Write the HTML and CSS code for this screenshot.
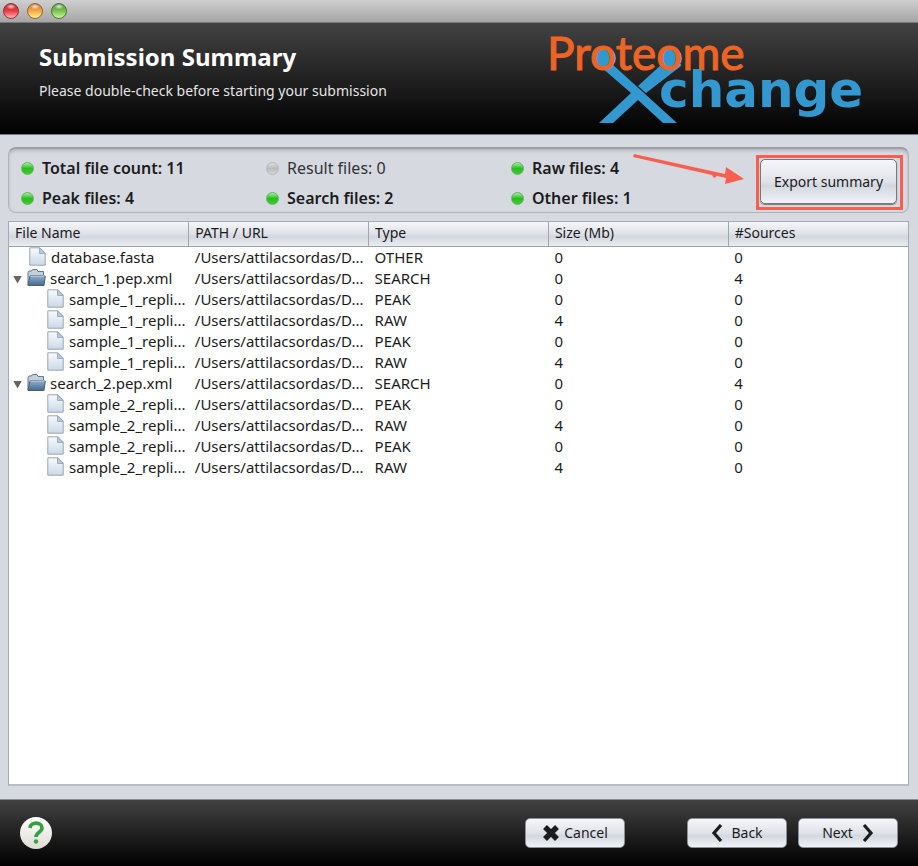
FILE: index.html
```html
<!DOCTYPE html>
<html lang="en">
<head>
<meta charset="utf-8">
<title>Submission Summary</title>
<link rel="stylesheet" href="styles.css">
</head>
<body>
<svg class="defs" aria-hidden="true">
  <defs>
    <linearGradient id="paper" x1="0" y1="0" x2="0" y2="1"><stop offset="0" stop-color="#f8fafc"/><stop offset="1" stop-color="#c9d9e8"/></linearGradient>
    <linearGradient id="folder" x1="0" y1="0" x2="0" y2="1"><stop offset="0" stop-color="#91adc8"/><stop offset="1" stop-color="#45688d"/></linearGradient>
    <symbol id="file" viewBox="0 0 17 19">
      <path d="M.8 .8H11L16.2 6V18.2H.8Z" fill="url(#paper)" stroke="#9aa5b1"/>
      <path d="M10.500 1V6.500H16Z" fill="#b4cbe1" stroke="#8fa4b9" stroke-width=".8"/>
    </symbol>
    <symbol id="dir" viewBox="0 0 19 19">
      <path d="M1 17V4.500L2 3H4L6 1.500H10L11 3.500H16.500V7" fill="#c3cfda" stroke="#62758a"/>
      <path d="M1 17L3 8H18.300L17 17.500H1Z" fill="url(#folder)" stroke="#41607f"/>
      <path d="M3.500 8.500H17.500" stroke="#a9c0d6"/>
    </symbol>
  </defs>
</svg>
<div class="titlebar"><span class="light red"></span><span class="light amber"></span><span class="light green"></span></div>
<header class="banner">
  <div class="heading">
    <h1>Submission Summary</h1>
    <p>Please double-check before starting your submission</p>
  </div>
  <svg class="logo" viewBox="0 0 374 101" role="img" aria-label="Proteome Xchange">
    <path d="M57 38L68 36L133 95H119L94 72L69 95H55L87 65L57 39ZM129 36H137V38L102 65L94 58L118 36Z" fill="#3498d0"/>
    <circle cx="62" cy="30" r="10" fill="#3498d0"/><circle cx="128" cy="30" r="10" fill="#3498d0"/>
    <text class="logo-top" x="3" y="42">Proteome</text>
    <text class="logo-bottom" x="115" y="79">change</text>
  </svg>
</header>
<main>
  <section class="summary">
    <ul>
      <li>Total file count: 11</li>
      <li class="none">Result files: 0</li>
      <li>Raw files: 4</li>
      <li>Peak files: 4</li>
      <li>Search files: 2</li>
      <li>Other files: 1</li>
    </ul>
    <div class="callout">
      <button class="btn export" type="button">Export summary</button>
      <svg class="arrow" viewBox="0 0 112 34" aria-hidden="true"><path d="M1 0L92 20L93 13L111 25L92 30L93 24L84 22L81 24L79 21L0 3Z" fill="#f95f50"/></svg>
    </div>
  </section>
  <div class="files">
    <table>
      <thead><tr><th>File Name</th><th>PATH / URL</th><th>Type</th><th>Size (Mb)</th><th>#Sources</th></tr></thead>
      <tbody>
        <tr><td class="top"><svg class="fi"><use href="#file"/></svg>database.fasta</td><td>/Users/attilacsordas/D...</td><td>OTHER</td><td>0</td><td>0</td></tr>
        <tr><td class="group"><button class="twist" type="button" aria-label="Collapse"></button><svg class="di"><use href="#dir"/></svg>search_1.pep.xml</td><td>/Users/attilacsordas/D...</td><td>SEARCH</td><td>0</td><td>4</td></tr>
        <tr><td class="child"><svg class="fi"><use href="#file"/></svg>sample_1_repli...</td><td>/Users/attilacsordas/D...</td><td>PEAK</td><td>0</td><td>0</td></tr>
        <tr><td class="child"><svg class="fi"><use href="#file"/></svg>sample_1_repli...</td><td>/Users/attilacsordas/D...</td><td>RAW</td><td>4</td><td>0</td></tr>
        <tr><td class="child"><svg class="fi"><use href="#file"/></svg>sample_1_repli...</td><td>/Users/attilacsordas/D...</td><td>PEAK</td><td>0</td><td>0</td></tr>
        <tr><td class="child"><svg class="fi"><use href="#file"/></svg>sample_1_repli...</td><td>/Users/attilacsordas/D...</td><td>RAW</td><td>4</td><td>0</td></tr>
        <tr><td class="group"><button class="twist" type="button" aria-label="Collapse"></button><svg class="di"><use href="#dir"/></svg>search_2.pep.xml</td><td>/Users/attilacsordas/D...</td><td>SEARCH</td><td>0</td><td>4</td></tr>
        <tr><td class="child"><svg class="fi"><use href="#file"/></svg>sample_2_repli...</td><td>/Users/attilacsordas/D...</td><td>PEAK</td><td>0</td><td>0</td></tr>
        <tr><td class="child"><svg class="fi"><use href="#file"/></svg>sample_2_repli...</td><td>/Users/attilacsordas/D...</td><td>RAW</td><td>4</td><td>0</td></tr>
        <tr><td class="child"><svg class="fi"><use href="#file"/></svg>sample_2_repli...</td><td>/Users/attilacsordas/D...</td><td>PEAK</td><td>0</td><td>0</td></tr>
        <tr><td class="child"><svg class="fi"><use href="#file"/></svg>sample_2_repli...</td><td>/Users/attilacsordas/D...</td><td>RAW</td><td>4</td><td>0</td></tr>
      </tbody>
    </table>
  </div>
</main>
<footer>
  <button class="help" type="button" aria-label="Help"><svg viewBox="0 0 32 32"><path d="M10 11C10.500 4.500 22 4.500 22 11C22 15.500 16 15 16 20" fill="none" stroke="#35a044" stroke-width="3.600"/><circle cx="16" cy="24.500" r="2.200" fill="#35a044"/></svg></button>
  <button class="btn cancel" type="button"><svg class="cross" viewBox="0 0 18 18"><path d="M3 3L15 15M15 3L3 15" stroke="#1c1c1c" stroke-width="5.500"/></svg>Cancel</button>
  <button class="btn back" type="button"><svg class="chev" viewBox="0 0 12 18"><path d="M10 1L3 9L10 17" fill="none" stroke="#1c1c1c" stroke-width="3.200"/></svg>Back</button>
  <button class="btn next" type="button">Next<svg class="chev" viewBox="0 0 12 18"><path d="M2 1L9 9L2 17" fill="none" stroke="#1c1c1c" stroke-width="3.200"/></svg></button>
</footer>
</body>
</html>
```
FILE: styles.css
```css
* { box-sizing: border-box; }

body {
  margin: 0;
  min-height: 100vh;
  display: flex;
  flex-direction: column;
  background: #d6d9df;
  color: #1c1c1c;
  font: 14px/20px "Noto Sans", "Open Sans", sans-serif;
}

.defs { position: absolute; width: 0; height: 0; }

.titlebar {
  display: flex;
  align-items: center;
  gap: 8px;
  height: 23px;
  padding-left: 3px;
  background: linear-gradient(#cfcfcf, #a5a5a5);
  border-bottom: 1px solid #777;
}

.light {
  width: 16px;
  height: 16px;
  border-radius: 50%;
  border: 1px solid #6b5a50;
}

.red { background: radial-gradient(ellipse 5px 3px at 50% 18%, #fffc, transparent), linear-gradient(#b5202b, #ed3a44 50%, #ffb3b3); border-color: #8a3538; }
.amber { background: radial-gradient(ellipse 5px 3px at 50% 18%, #fffc, transparent), linear-gradient(#c9692c, #f5ab45 50%, #fff08c); border-color: #95643a; }
.green { background: radial-gradient(ellipse 5px 3px at 50% 18%, #fffc, transparent), linear-gradient(#4c8b35, #7cc350 50%, #d0f59c); border-color: #4d7440; }

.banner {
  display: flex;
  justify-content: space-between;
  height: 112px;
  padding-left: 39px;
  background: linear-gradient(#424242, #000);
  border-bottom: 1px solid #77797d;
  color: #fff;
}

.heading { padding-top: 18px; }

h1 {
  margin: 0;
  font-size: 24px;
  line-height: 32px;
}

.heading p {
  margin: 8px 0 0;
  color: #e4e4e4;
}

.logo { width: 374px; height: 101px; margin-top: 5px; overflow: visible; }
.logo-top { font: 46px Lato, sans-serif; fill: #ee6425; stroke: #ee6425; stroke-width: 1px; }
.logo-bottom { font: bold 50px "DejaVu Sans", sans-serif; fill: #3498d0; }

main {
  flex: 1;
  display: flex;
  flex-direction: column;
  gap: 8px;
  padding: 12px 9px 13px 8px;
}

.summary {
  display: flex;
  justify-content: space-between;
  height: 66px;
  border: 1px solid #b0b3b9;
  border-top: 2px solid #9b9ea4;
  border-radius: 8px;
  box-shadow: inset 0 2px 3px #b6b9bf;
}

.summary ul {
  flex: 1;
  display: grid;
  grid-template-columns: repeat(3, 1fr);
  grid-auto-rows: 20px;
  row-gap: 10px;
  margin: 0;
  padding: 9px 0 0 12px;
  list-style: none;
  font-size: 16px;
  font-weight: 600;
}

.summary li { display: flex; align-items: center; gap: 8px; white-space: nowrap; }

.summary li::before {
  content: "";
  width: 11px;
  height: 11px;
  border-radius: 50%;
  background: linear-gradient(#a5ec9c, #2cbb24 50%, #38cf28);
  border: 1px solid #62b75c;
}

.summary .none { font-weight: 400; color: #333; }
.summary .none::before { background: linear-gradient(#ddd, #bbb 50%, #d5d5d5); border-color: #b8b8b8; }

.callout {
  position: relative;
  width: 147px;
  height: 55px;
  margin: 6px 5px 0 0;
  padding: 1px 3px 3px 1px;
  border: 3px solid #f95f50;
}

.arrow {
  position: absolute;
  right: 155px;
  top: -4px;
  width: 112px;
  height: 34px;
}

.btn {
  display: flex;
  align-items: center;
  justify-content: center;
  padding: 0;
  border: 1px solid #8c9097;
  border-radius: 5px;
  background: linear-gradient(#f6f7f9, #dfe2e8 50%, #d3d7df 60%, #f0f2f6);
  color: #1c1c1c;
  font: inherit;
}

.export {
  width: 100%;
  height: 100%;
  border-color: #74787f;
  box-shadow: 0 1px 1px #777;
}

.files {
  flex: 1;
  border: 1px solid #a5a9b2;
  border-bottom: 2px solid #b8bcc4;
  background: #fff;
}

table { width: 100%; table-layout: fixed; border-collapse: collapse; }

th {
  height: 24px;
  padding: 0 6px 2px;
  text-align: left;
  font-weight: 400;
  background: linear-gradient(#f5f6f8, #dde0e6 50%, #d3d7de 60%, #e9ecf0);
  border-right: 1px solid #a1a5ad;
  border-bottom: 1px solid #9da2ab;
}

th:last-child { border-right: 0; }

td { height: 21px; padding: 0 6px 1px; font-size: 15px; white-space: nowrap; }
td svg { margin-right: 5px; vertical-align: top; }
.fi { width: 17px; height: 19px; }
.di { width: 19px; height: 19px; }
.top { padding-left: 20px; }
.child { padding-left: 38px; }
.group { padding-left: 4px; }
td.group svg { margin-right: 4px; }

.twist {
  width: 9px;
  height: 8px;
  margin: 0 5px 0 0;
  padding: 0;
  border: 0;
  background: #656565;
  clip-path: polygon(0 0, 100% 0, 50% 100%);
}

footer {
  display: flex;
  align-items: center;
  height: 67px;
  padding: 0 20px;
  background: linear-gradient(#424242, #000);
  border-top: 1px solid #8a8c90;
}

.help {
  width: 32px;
  height: 32px;
  margin-right: auto;
  padding: 0;
  border: 0;
  border-radius: 50%;
  background: linear-gradient(#fff, #dddcd2);
}

.help svg { display: block; width: 32px; height: 32px; }

footer .btn { width: 100px; height: 30px; }
.cancel { gap: 4px; }
.cross { width: 18px; height: 18px; }
.back { gap: 8px; margin: 0 11px 0 62px; }
.next { gap: 9px; }
.chev { width: 12px; height: 18px; }
```
